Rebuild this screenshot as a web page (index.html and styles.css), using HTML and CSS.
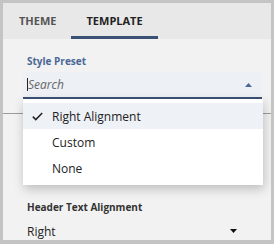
FILE: index.html
```html
<!DOCTYPE html>
<html lang="en">
<head>
    <meta charset="UTF-8">
    <meta name="viewport" content="width=device-width, initial-scale=1.0">
    <title>Template Settings</title>
    <link rel="stylesheet" href="styles.css">
</head>
<body>
    <div class="panel">
        <!-- tab strip -->
        <div class="tabs">
            <div class="tab">THEME</div>
            <div class="tab active">TEMPLATE</div>
        </div>

        <div class="section first">
            <div class="label accent">Style Preset</div>
            <div class="field search">
                <span class="caret"></span>
                <span class="placeholder">Search</span>
                <svg class="arrow" width="7" height="4" viewBox="0 0 7 4"><polygon points="0,4 3.5,0 7,4" fill="#4a6896"/></svg>
            </div>
        </div>

        <div class="section">
            <div class="label">Header Text Alignment</div>
            <div class="field select">
                <span class="value">Right</span>
                <svg class="arrow" width="7" height="4" viewBox="0 0 7 4"><polygon points="0,0 7,0 3.5,4" fill="#111"/></svg>
            </div>
        </div>

        <!-- open dropdown menu -->
        <ul class="menu">
            <li class="item selected">
                <span class="check">
                    <svg width="11" height="9" viewBox="0 0 11 9"><polyline points="0.8,4.6 3.8,7.6 10.2,1" fill="none" stroke="#222" stroke-width="1.5"/></svg>
                </span>
                Right Alignment
            </li>
            <li class="item"><span class="check"></span>Custom</li>
            <li class="item"><span class="check"></span>None</li>
        </ul>
    </div>
</body>
</html>
```

FILE: styles.css
```css
body {
    margin: 0;
    font-family: "Open Sans", "Noto Sans", sans-serif;
    color: #222;
}

.panel {
    position: relative;
    width: 268px;
    height: 237px;
    border: 3px solid #c4c4c4;
    border-bottom-width: 4px;
    background-color: #f2f2f2;
    overflow: hidden;
}

.tabs {
    display: flex;
    height: 36px;
    padding-left: 1px;
    background-color: #e8e8e8;
}

.tab {
    height: 30px;
    padding: 3px 15px 0;
    font-size: 11px;
    font-weight: 700;
    line-height: 30px;
    color: #555;
    border-bottom: 3px solid transparent;
}

.tab.active {
    color: #222;
    border-bottom-color: #3b5275;
}

.section {
    padding: 0 9px 0 20px;
}

.section.first {
    padding-top: 15px;
    padding-bottom: 14px;
    border-bottom: 1px solid #9c9c9c;
}

.label {
    padding-left: 4px;
    font-size: 10px;
    font-weight: 700;
    line-height: 14px;
    color: #333;
}

.label.accent {
    color: #4a6896;
}

.section + .section {
    padding-top: 86px;
}

.field {
    display: flex;
    align-items: center;
    height: 25px;
    margin-top: 4px;
    padding-left: 4px;
}

.search {
    background-color: #edf0f5;
    border-bottom: 2px solid #3b5275;
    padding-right: 10px;
}

.select {
    height: 26px;
    padding-right: 25px;
}

.caret {
    width: 1px;
    height: 13px;
    background-color: #222;
}

.placeholder {
    font-size: 12px;
    font-style: italic;
    color: #666;
}

.value {
    font-size: 12px;
}

.arrow {
    margin-left: auto;
}

.menu {
    position: absolute;
    top: 96px;
    left: 20px;
    width: 240px;
    margin: 0;
    padding: 4px 0;
    list-style: none;
    background-color: #fff;
    box-shadow: 1px 4px 10px rgba(0, 0, 0, 0.22);
}

.item {
    display: flex;
    align-items: center;
    height: 26px;
    padding-left: 9px;
    font-size: 12px;
    color: #222;
}

.item.selected {
    background-color: #eef1f6;
}

.check {
    display: flex;
    width: 20px;
}
```
